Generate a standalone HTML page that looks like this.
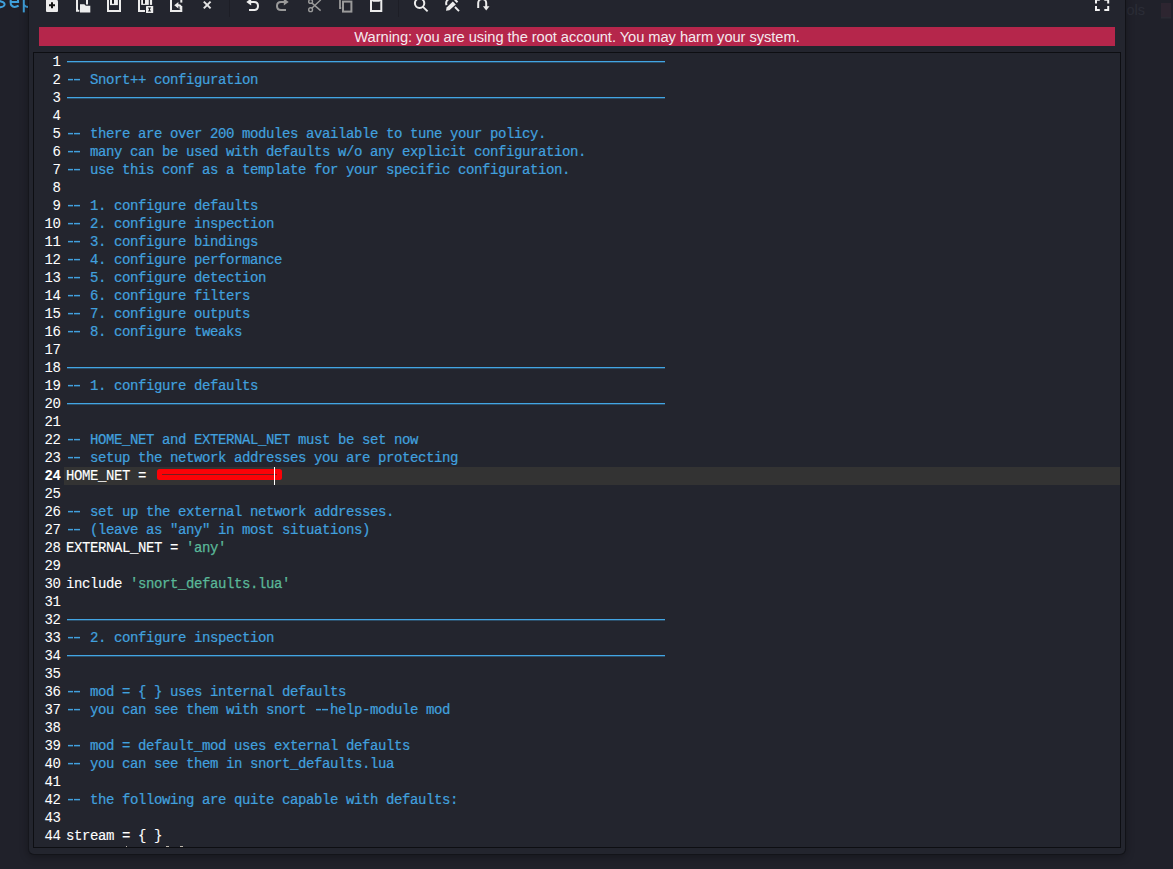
<!DOCTYPE html>
<html><head><meta charset="utf-8"><title>snort.lua - Mousepad</title>
<style>
html,body{margin:0;padding:0;}
body{width:1173px;height:869px;overflow:hidden;background:#20212a;position:relative;font-family:"Liberation Sans",sans-serif;}
#bgr .ols{position:absolute;left:1126.5px;top:2px;font-size:14.5px;line-height:17px;color:#2b2d37;}
#bgr .rb{position:absolute;left:1160.5px;top:3px;width:10.5px;height:14px;background:#2d2530;box-shadow:0 1.5px 0 #2a2a33;}
#win{position:absolute;left:28px;top:-10px;width:1098px;height:865px;background:#23252e;border-left:1px solid #15161c;border-right:1px solid #111217;border-bottom:1px solid #131419;border-radius:0 0 6px 6px;box-sizing:border-box;box-shadow:0 2px 9px rgba(0,0,0,0.32);}
#warn{position:absolute;left:39px;top:27px;width:1076px;height:19px;background:#b5264b;color:#f4e9ee;font-size:14.7px;letter-spacing:-0.06px;line-height:21px;height:19px;overflow:hidden;text-align:center;}
#ed{position:absolute;left:33px;top:52px;width:1088px;height:796px;box-sizing:border-box;border:1px solid #0d0e12;background:#23252e;overflow:hidden;}
.ln{position:relative;height:18px;line-height:18px;font-family:"Liberation Mono",monospace;font-size:14px;letter-spacing:-0.4px;-webkit-text-stroke:0.12px;color:#ffffff;white-space:pre;}
.n{-webkit-text-stroke:0.05px;position:absolute;left:0;width:26.6px;text-align:right;}
.t{position:absolute;left:32px;top:0;height:18px;}
.c{color:#41a0de;-webkit-text-stroke:0.22px;}
.dd{display:inline-block;position:relative;width:16px;height:18px;vertical-align:top;}
.dd::before,.dd::after{content:"";position:absolute;top:8px;height:1px;background:#41a0de;box-shadow:0 1px 0 rgba(65,160,222,0.36),0 -1px 0 rgba(65,160,222,0.12);width:5.6px;left:1.8px;}
.dd::after{left:8.2px;width:5.8px;}
.s{color:#5ab898;-webkit-text-stroke:0.25px;}
.rule{position:absolute;left:1px;top:8px;width:598px;height:1px;background:#42a5e3;box-shadow:0 1px 0 rgba(66,165,227,0.32);}
.cur{font-weight:normal;}
.cur .n{font-weight:bold;}
.cur::before{content:"";position:absolute;left:30px;right:0;top:0;height:18px;background:#333333;}
.red{position:absolute;left:91px;top:2px;width:125.3px;height:11px;background:#fb0207;border-radius:2.5px;}
.red::after{content:"";position:absolute;left:5px;right:5px;top:4.9px;height:0;border-top:1px solid rgba(45,45,45,0.65);}
.caret{position:absolute;left:207.9px;top:0;width:1.2px;height:18px;background:#fff;}
.mk{position:absolute;top:792.6px;height:1.2px;background:#d9d2c4;opacity:.85;}
#lines{position:absolute;left:0;top:0px;width:100%;}
</style></head><body>
<svg id="bgtext" width="29" height="16" viewBox="0 0 29 16" style="position:absolute;left:0;top:0;overflow:hidden"><g fill="none" stroke="#3fa0db" stroke-width="2">
<path d="M-4 5.8 C-1.5 7.2 1.8 7.3 3.4 6.2 C5 5 5 3.2 3.4 2.3 C2 1.5 0 1.4 -2 0.4"/>
<path d="M10.6 2.1 H18.1 C18.1 -2 16.5 -3.4 14.3 -3.4 C11.8 -3.4 10.6 -1 10.6 2.1 C10.6 5.3 12 6.9 14.6 6.9 C16.2 6.9 17.4 6.5 18.6 5.7"/>
<path d="M23.8 -5 V12.4"/>
<path d="M23.8 4.6 Q25 7 29 7"/>
</g></svg>
<div id="bgr"><span class="ols">ols</span><span class="rb"></span></div>
<div id="win"></div>
<svg id="tb" width="1173" height="24" viewBox="0 0 1173 24" style="position:absolute;left:0;top:0;overflow:hidden">
<g fill="none" stroke="#ececec" stroke-width="2" stroke-linejoin="miter">
<!-- new -->
<path d="M46.5 -5 H54.5 L58 1.2 V11 Q58 12 57 12 H47 Q46 12 46 11 V-5 Z" fill="#ececec" stroke="none"/>
<path d="M49 5.2 H55 M52 2.2 V8.2" stroke="#111" stroke-width="2"/>
<!-- open -->
<path d="M77 -4 V10.8 H79.3" />
<path d="M87 -4 V4.5" />
<path d="M80 4.3 H84.3 L85.8 5.8 H90.3 V12.6 H80 Z" fill="#ececec" stroke="none"/>
<!-- save -->
<path d="M108 -4 V11 H120 V-4" />
<path d="M110 -4 H117.9 V5.1 H110 Z" fill="#eeeeee" stroke="none"/>
<path d="M112 -4 H114 V3.7 H112 Z" fill="#15161c" stroke="none"/>
<!-- save as -->
<path d="M139 -4 V11 H145" />
<path d="M151 -4 V4.9" stroke-width="2.2"/>
<path d="M141.2 -4 H148.8 V4.9 H141.2 Z" fill="#eeeeee" stroke="none"/>
<path d="M143 -4 H145 V3.7 H143 Z" fill="#15161c" stroke="none"/>
<rect x="146" y="6" width="7.2" height="7" rx="0.6" fill="#ececec" stroke="none"/>
<path d="M148 8 H151 M148 11 H151" stroke="#15161c" stroke-width="0.9"/><path d="M149.5 8 V11" stroke="#15161c" stroke-width="1.1"/>
<!-- revert -->
<path d="M171 -4 V11 H181.3 V6" />
<path d="M181.3 -4 V2.6" />
<path d="M174.2 5.2 L178.4 2 V8.4 Z" fill="#ececec" stroke="none"/>
<path d="M177.5 5.2 H179 Q180.6 5.2 180.6 7 V9.4" stroke-width="2"/>
<!-- close x -->
<path d="M203.8 1.6 L210.6 8.4 M210.6 1.6 L203.8 8.4" stroke="#e4e4e4" stroke-width="2"/>
<!-- undo -->
<path d="M249.6 2 H254 Q258 2 258 6 Q258 10 254 10 H249" />
<path d="M246.3 2 L251.2 -1.6 V5.6 Z" fill="#ececec" stroke="none"/>
<!-- paste -->
<path d="M371 -4 V11 H381.3 V-4" />
<path d="M371 -1 H381.3 V1 H380 L379.5 1.7 H372.8 L372.3 1 H371 Z" fill="#ececec" stroke="none"/>
<!-- search -->
<circle cx="419.6" cy="3.3" r="4.7"/>
<path d="M423 6.8 L427.6 11.4" stroke-width="1.9"/>
<!-- replace -->
<path d="M446.6 5.2 A4.7 4.7 0 0 1 451.5 -1.4" stroke-width="2"/>
<path d="M455 7 L459 11.2" stroke-width="1.9"/>
<path d="M446 10.7 L446.6 7.6 L452.8 1.4 L455.8 4.4 L449.4 10.2 Z" fill="#ececec" stroke="none"/>
<path d="M454.2 0.4 L455.6 -1 L458.2 1.6 L456.8 3 Z" fill="#ececec" stroke="none"/>
<!-- goto -->
<path d="M478.2 8 V3 A4 4 0 0 1 486.2 3 V7" />
<path d="M482.9 6.2 H489.5 L486.2 10.5 Z" fill="#ececec" stroke="none"/>
<!-- fullscreen -->
<path d="M1096 3.6 V-0.3 H1099.8 M1108.2 3.6 V-0.3 H1104.3 M1096 6 V9.9 H1099.8 M1108.2 6 V9.9 H1104.3" stroke="#f2f2f2"/>
</g>
<g fill="none" stroke="#9a9a9a" stroke-width="2">
<!-- redo -->
<path d="M285.4 2 H281 Q277 2 277 6 Q277 10 281 10 H286" />
<path d="M288.7 2 L283.8 -1.6 V5.6 Z" fill="#9a9a9a" stroke="none"/>
<!-- cut -->
<g stroke-width="1.4">
<circle cx="310.6" cy="1.4" r="1.9"/>
<circle cx="310.6" cy="9.7" r="1.9"/>
<path d="M311.8 2.9 L320.6 10.6 M311.8 8.2 L320.8 -0.2"/>
</g>
<!-- copy -->
<path d="M340 -4 V8 H341.2" stroke-width="1.8"/>
<rect x="343" y="1.6" width="8.4" height="10" />
</g>
<!-- separators -->
<path d="M229.5 0 V17 M398.5 0 V17" stroke="#1d1e26" stroke-width="1"/>
</svg>

<div id="warn">Warning: you are using the root account. You may harm your system.</div>
<div id="ed"><div id="lines">
<div class="ln"><span class="n"><span class="x">1</span></span><span class="t"><span class="rule"></span></span></div>
<div class="ln"><span class="n"><span class="x">2</span></span><span class="t"><span class="c"><span class="dd"></span><span class="x"> Snort++ configuration</span></span></span></div>
<div class="ln"><span class="n"><span class="x">3</span></span><span class="t"><span class="rule"></span></span></div>
<div class="ln"><span class="n"><span class="x">4</span></span><span class="t"></span></div>
<div class="ln"><span class="n"><span class="x">5</span></span><span class="t"><span class="c"><span class="dd"></span><span class="x"> there are over 200 modules available to tune your policy.</span></span></span></div>
<div class="ln"><span class="n"><span class="x">6</span></span><span class="t"><span class="c"><span class="dd"></span><span class="x"> many can be used with defaults w/o any explicit configuration.</span></span></span></div>
<div class="ln"><span class="n"><span class="x">7</span></span><span class="t"><span class="c"><span class="dd"></span><span class="x"> use this conf as a template for your specific configuration.</span></span></span></div>
<div class="ln"><span class="n"><span class="x">8</span></span><span class="t"></span></div>
<div class="ln"><span class="n"><span class="x">9</span></span><span class="t"><span class="c"><span class="dd"></span><span class="x"> 1. configure defaults</span></span></span></div>
<div class="ln"><span class="n"><span class="x">10</span></span><span class="t"><span class="c"><span class="dd"></span><span class="x"> 2. configure inspection</span></span></span></div>
<div class="ln"><span class="n"><span class="x">11</span></span><span class="t"><span class="c"><span class="dd"></span><span class="x"> 3. configure bindings</span></span></span></div>
<div class="ln"><span class="n"><span class="x">12</span></span><span class="t"><span class="c"><span class="dd"></span><span class="x"> 4. configure performance</span></span></span></div>
<div class="ln"><span class="n"><span class="x">13</span></span><span class="t"><span class="c"><span class="dd"></span><span class="x"> 5. configure detection</span></span></span></div>
<div class="ln"><span class="n"><span class="x">14</span></span><span class="t"><span class="c"><span class="dd"></span><span class="x"> 6. configure filters</span></span></span></div>
<div class="ln"><span class="n"><span class="x">15</span></span><span class="t"><span class="c"><span class="dd"></span><span class="x"> 7. configure outputs</span></span></span></div>
<div class="ln"><span class="n"><span class="x">16</span></span><span class="t"><span class="c"><span class="dd"></span><span class="x"> 8. configure tweaks</span></span></span></div>
<div class="ln"><span class="n"><span class="x">17</span></span><span class="t"></span></div>
<div class="ln"><span class="n"><span class="x">18</span></span><span class="t"><span class="rule"></span></span></div>
<div class="ln"><span class="n"><span class="x">19</span></span><span class="t"><span class="c"><span class="dd"></span><span class="x"> 1. configure defaults</span></span></span></div>
<div class="ln"><span class="n"><span class="x">20</span></span><span class="t"><span class="rule"></span></span></div>
<div class="ln"><span class="n"><span class="x">21</span></span><span class="t"></span></div>
<div class="ln"><span class="n"><span class="x">22</span></span><span class="t"><span class="c"><span class="dd"></span><span class="x"> HOME_NET and EXTERNAL_NET must be set now</span></span></span></div>
<div class="ln"><span class="n"><span class="x">23</span></span><span class="t"><span class="c"><span class="dd"></span><span class="x"> setup the network addresses you are protecting</span></span></span></div>
<div class="ln cur"><span class="n"><span class="x">24</span></span><span class="t"><span class="x">HOME_NET = </span><span class="red"></span><span class="caret"></span></span></div>
<div class="ln"><span class="n"><span class="x">25</span></span><span class="t"></span></div>
<div class="ln"><span class="n"><span class="x">26</span></span><span class="t"><span class="c"><span class="dd"></span><span class="x"> set up the external network addresses.</span></span></span></div>
<div class="ln"><span class="n"><span class="x">27</span></span><span class="t"><span class="c"><span class="dd"></span><span class="x"> (leave as "any" in most situations)</span></span></span></div>
<div class="ln"><span class="n"><span class="x">28</span></span><span class="t"><span class="x">EXTERNAL_NET = <span class="s">'any'</span></span></span></div>
<div class="ln"><span class="n"><span class="x">29</span></span><span class="t"></span></div>
<div class="ln"><span class="n"><span class="x">30</span></span><span class="t"><span class="x">include <span class="s">'snort_defaults.lua'</span></span></span></div>
<div class="ln"><span class="n"><span class="x">31</span></span><span class="t"></span></div>
<div class="ln"><span class="n"><span class="x">32</span></span><span class="t"><span class="rule"></span></span></div>
<div class="ln"><span class="n"><span class="x">33</span></span><span class="t"><span class="c"><span class="dd"></span><span class="x"> 2. configure inspection</span></span></span></div>
<div class="ln"><span class="n"><span class="x">34</span></span><span class="t"><span class="rule"></span></span></div>
<div class="ln"><span class="n"><span class="x">35</span></span><span class="t"></span></div>
<div class="ln"><span class="n"><span class="x">36</span></span><span class="t"><span class="c"><span class="dd"></span><span class="x"> mod = { } uses internal defaults</span></span></span></div>
<div class="ln"><span class="n"><span class="x">37</span></span><span class="t"><span class="c"><span class="dd"></span><span class="x"> you can see them with snort </span><span class="dd"></span><span class="x">help-module mod</span></span></span></div>
<div class="ln"><span class="n"><span class="x">38</span></span><span class="t"></span></div>
<div class="ln"><span class="n"><span class="x">39</span></span><span class="t"><span class="c"><span class="dd"></span><span class="x"> mod = default_mod uses external defaults</span></span></span></div>
<div class="ln"><span class="n"><span class="x">40</span></span><span class="t"><span class="c"><span class="dd"></span><span class="x"> you can see them in snort_defaults.lua</span></span></span></div>
<div class="ln"><span class="n"><span class="x">41</span></span><span class="t"></span></div>
<div class="ln"><span class="n"><span class="x">42</span></span><span class="t"><span class="c"><span class="dd"></span><span class="x"> the following are quite capable with defaults:</span></span></span></div>
<div class="ln"><span class="n"><span class="x">43</span></span><span class="t"></span></div>
<div class="ln"><span class="n"><span class="x">44</span></span><span class="t"><span class="x">stream = { }</span></span></div>
<div class="ln"><span class="n"><span class="x">45</span></span><span class="t"><span class="x">stream_ip = { }</span></span></div>
</div><i class="mk" style="left:91.6px;width:1.6px"></i><i class="mk" style="left:132px;width:3px"></i><i class="mk" style="left:145.8px;width:3px"></i></div>
</body></html>
